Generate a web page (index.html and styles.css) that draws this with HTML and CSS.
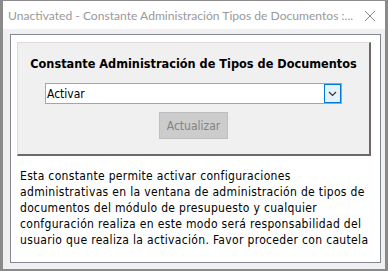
FILE: index.html
```html
<!DOCTYPE html>
<html lang="es">
<head>
  <meta charset="UTF-8">
  <title>Constante Administración Tipos de Documentos</title>
  <link rel="stylesheet" href="styles.css">
</head>
<body>

  <div class="window">
    <!-- Barra de titulo -->
    <div class="title-bar">
      <span class="title">Unactivated - Constante Administración Tipos de Documentos :...</span>
      <svg class="close" width="12" height="12" viewBox="0 0 12 12">
        <path d="M1 1 L11 11 M11 1 L1 11" stroke="#8a8a8a" stroke-width="1" fill="none"/>
      </svg>
    </div>

    <!-- Contenido -->
    <div class="content">
      <div class="frame">
        <div class="panel">
          <h3 class="panel-title">Constante Administración de Tipos de Documentos</h3>
          <div class="combo">
            <span class="combo-text">Activar</span>
            <span class="combo-btn">
              <svg width="9" height="6" viewBox="0 0 9 6">
                <path d="M1 1 L4.5 4.5 L8 1" stroke="#333" stroke-width="1.2" fill="none"/>
              </svg>
            </span>
          </div>
          <button class="btn" disabled>Actualizar</button>
        </div>

        <p class="info">
          Esta constante permite activar configuraciones<br>
          administrativas en la ventana de administración de tipos de<br>
          documentos del módulo de presupuesto y cualquier<br>
          confguración realiza en este modo será responsabilidad del<br>
          usuario que realiza la activación. Favor proceder con cautela
        </p>
      </div>
    </div>
  </div>

</body>
</html>
```

FILE: styles.css
```css
body {
  margin: 0;
  background: #fff;
}

.window {
  width: 388px;
  height: 271px;
  box-sizing: border-box;
  border: 3px solid #8a8a8a;
  border-top-width: 1px;
  border-bottom-width: 2px;
  display: flex;
  flex-direction: column;
  background: #f0f0f0;
}

.title-bar {
  height: 28px;
  background: #fff;
  display: flex;
  align-items: center;
  padding-left: 5px;
  position: relative;
}

.title {
  font-family: Lato, "Noto Sans", sans-serif;
  font-size: 12.1px;
  color: #999;
  white-space: nowrap;
}

.close {
  position: absolute;
  right: 9px;
  top: 9px;
}

.content {
  flex: 1;
  padding: 5px 4px 6px 7px;
  display: flex;
}

.frame {
  flex: 1;
  border: 1px solid #828790;
  background: #fff;
  padding: 7px 9px 0 6px;
}

.panel {
  height: 111px;
  background: #f0f0f0;
  border-top: 1px solid #dcdcdc;
  border-left: 1px solid #dcdcdc;
  border-right: 2px solid #6a6a6a;
  border-bottom: 2px solid #6a6a6a;
  display: flex;
  flex-direction: column;
  align-items: center;
  font-family: "DejaVu Sans Condensed", "DejaVu Sans", sans-serif;
}

.panel-title {
  margin: 13px 0 0 0;
  font-size: 12.6px;
  font-weight: bold;
  color: #000;
  line-height: 16px;
}

.combo {
  margin-top: 11px;
  width: 297px;
  height: 21px;
  box-sizing: border-box;
  border: 1px solid #a5a5a5;
  background: #fff;
  display: flex;
  align-items: center;
  justify-content: space-between;
}

.combo-text {
  font-size: 12px;
  padding-left: 1px;
  color: #000;
}

.combo-btn {
  width: 17px;
  height: 19px;
  box-sizing: border-box;
  border: 1px solid #0078d7;
  background: #e5f1fb;
  display: flex;
  align-items: center;
  justify-content: center;
}

.btn {
  margin-top: 8px;
  width: 69px;
  height: 27px;
  background: #cccccc;
  border: 1px solid #bfbfbf;
  color: #838383;
  font-family: "DejaVu Sans Condensed", "DejaVu Sans", sans-serif;
  font-size: 12px;
  padding: 0;
}

.info {
  margin: 12px 0 0 3px;
  font-family: "DejaVu Sans Condensed", "DejaVu Sans", sans-serif;
  font-size: 12px;
  letter-spacing: 0.33px;
  line-height: 16px;
  color: #000;
  white-space: nowrap;
}
```
